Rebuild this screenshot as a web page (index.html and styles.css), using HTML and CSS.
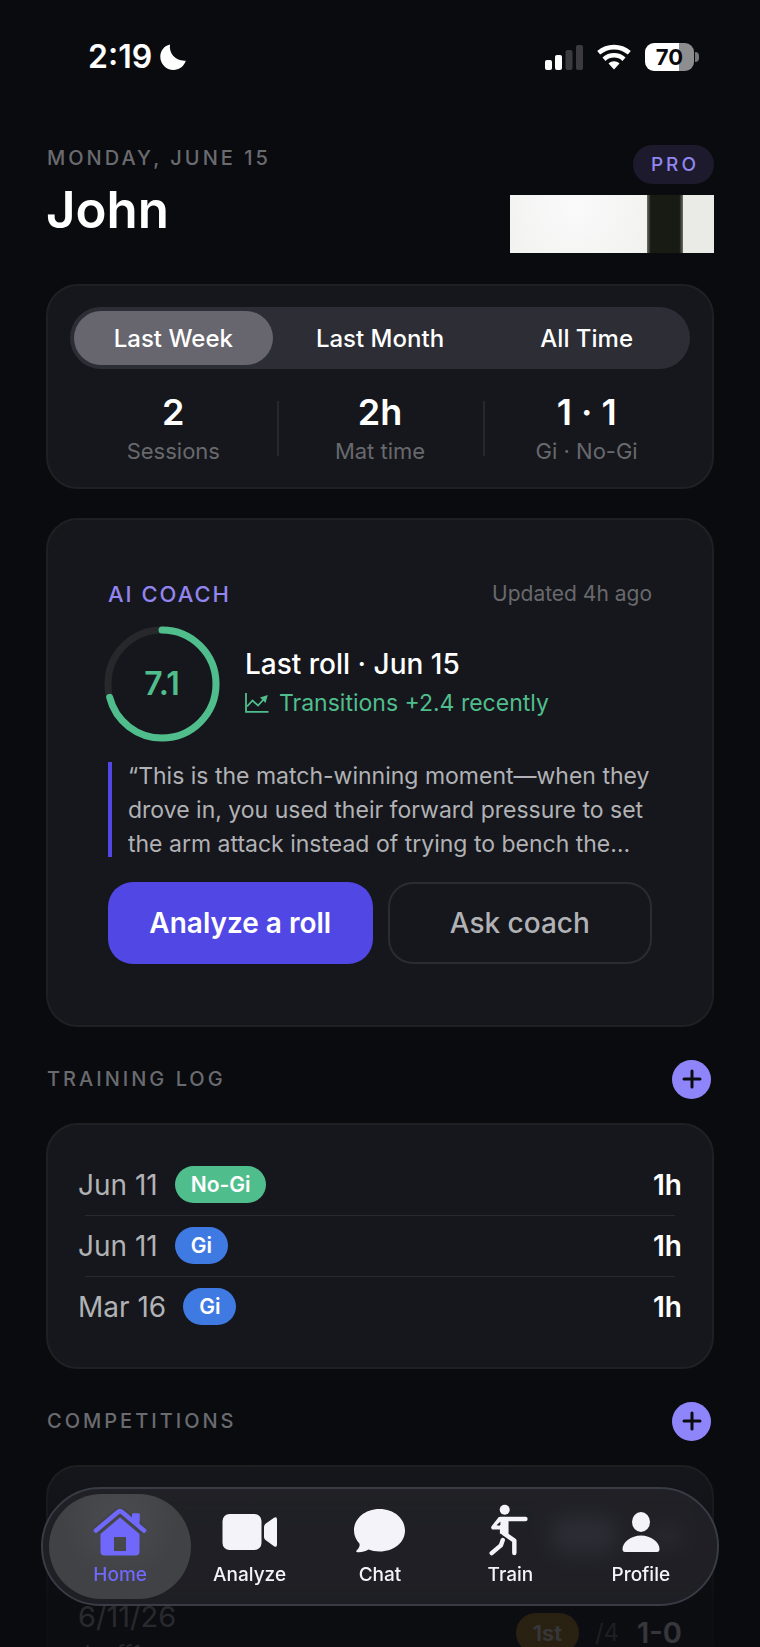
FILE: index.html
```html
<!DOCTYPE html>
<html lang="en">
<head>
<meta charset="utf-8">
<meta name="viewport" content="width=device-width, initial-scale=1">
<title>Home</title>
<link rel="stylesheet" href="styles.css">
</head>
<body>
<div class="app">
  <div class="status">
    <div class="status-time">
      <span>2:19</span>
      <svg width="26" height="26" viewBox="0 0 26 26" aria-hidden="true"><path d="M10 0.6C8.800 8.500 14.500 17.500 25.800 16.800C24 22.500 19 26 13.500 26C6 26 0.300 20 0.300 12.800C0.300 7 4.200 1.800 10 0.600Z" fill="#fff"/></svg>
    </div>
    <div class="status-icons">
      <svg width="38" height="26" viewBox="0 0 38 26" aria-hidden="true"><rect x="0" y="16" width="7" height="10" rx="2" fill="#fff"/><rect x="10" y="11" width="7" height="15" rx="2" fill="#fff"/><rect x="20.500" y="6" width="7" height="20" rx="2" fill="#3b3b3f"/><rect x="31" y="1" width="7" height="25" rx="2" fill="#3b3b3f"/></svg>
      <svg width="34" height="26" viewBox="0 0 34 26" aria-hidden="true"><g fill="none" stroke="#fff" stroke-width="4.600"><path d="M1.700 8.800C10.500 1.200 23.500 1.200 32.300 8.800"/><path d="M7 15.200C12.800 10 21.200 10 27 15.200"/></g><path d="M11.500 19.400C14.700 16.500 19.300 16.500 22.500 19.400L17 25.400Z" fill="#fff"/></svg>
      <div class="battery"><span>70</span></div>
    </div>
  </div>

  <main class="content">
    <header class="hero">
      <div>
        <p class="eyebrow">MONDAY, JUNE 15</p>
        <h1 class="name">John</h1>
      </div>
      <div class="hero-side">
        <span class="pro">PRO</span>
        <div class="belt" role="img" aria-label="White belt"></div>
      </div>
    </header>

    <section class="card summary">
      <div class="segments">
        <button type="button" class="segment segment-on">Last Week</button>
        <button type="button" class="segment">Last Month</button>
        <button type="button" class="segment">All Time</button>
      </div>
      <div class="stats">
        <div class="stat"><strong>2</strong><span>Sessions</span></div>
        <div class="stat"><strong>2h</strong><span>Mat time</span></div>
        <div class="stat"><strong>1 · 1</strong><span>Gi · No-Gi</span></div>
      </div>
    </section>

    <section class="card coach">
      <div class="coach-head">
        <h2>AI COACH</h2>
        <span>Updated 4h ago</span>
      </div>
      <div class="roll">
        <div class="ring">
          <svg viewBox="0 0 116 116" aria-hidden="true"><g fill="none" stroke-width="7"><circle cx="58" cy="58" r="54" stroke="#27282c"/><circle cx="58" cy="58" r="54" stroke="#50be8c" stroke-linecap="round" pathLength="100" stroke-dasharray="71 100" transform="rotate(-90 58 58)"/></g></svg>
          <span>7.1</span>
        </div>
        <div class="roll-text">
          <h3>Last roll · Jun 15</h3>
          <p>
            <svg width="24" height="20" viewBox="0 0 24 20" aria-hidden="true"><g fill="none" stroke="#50be8c" stroke-width="1.800"><path d="M1 0V18.800H23.500" /><path d="M2 13.500L7.500 7.500L13 12.500L19 6"/></g><path d="M15 4.500L22.800 2L20.500 10Z" fill="#50be8c"/></svg>
            Transitions +2.4 recently
          </p>
        </div>
      </div>
      <blockquote class="quote">“This is the match-winning moment—when they drove in, you used their forward pressure to set the arm attack instead of trying to bench the…</blockquote>
      <div class="actions">
        <button type="button" class="btn btn-primary">Analyze a roll</button>
        <button type="button" class="btn btn-ghost">Ask coach</button>
      </div>
    </section>

    <div class="section-head">
      <h2 class="eyebrow">TRAINING LOG</h2>
      <button type="button" class="add" aria-label="Add session"><svg width="20" height="20" viewBox="0 0 20 20"><path d="M10 2V18M2 10H18" stroke="#0b0c10" stroke-width="3" stroke-linecap="round"/></svg></button>
    </div>
    <ul class="card log">
      <li><span class="date">Jun 11</span><span class="tag tag-nogi">No-Gi</span><strong>1h</strong></li>
      <li><span class="date">Jun 11</span><span class="tag">Gi</span><strong>1h</strong></li>
      <li><span class="date">Mar 16</span><span class="tag">Gi</span><strong>1h</strong></li>
    </ul>

    <div class="section-head">
      <h2 class="eyebrow">COMPETITIONS</h2>
      <button type="button" class="add" aria-label="Add competition"><svg width="20" height="20" viewBox="0 0 20 20"><path d="M10 2V18M2 10H18" stroke="#0b0c10" stroke-width="3" stroke-linecap="round"/></svg></button>
    </div>
    <section class="card comps">
      <div class="comp-top" aria-hidden="true"><i class="bar"></i><i class="bar bar-place"></i><i class="bar bar-score"></i></div>
      <div class="comp">
        <div class="comp-name"><span>6/11/26</span><small>Jnoff1</small></div>
        <span class="place">1st</span><span class="of">/4</span><strong>1-0</strong>
      </div>
    </section>
  </main>

  <div class="fade"></div>
  <nav class="tabs">
    <a href="#home" class="tab tab-on">
      <svg width="54" height="48" viewBox="0 0 54 48" aria-hidden="true"><g fill="#7068fb"><path d="M27 9.500L46.500 26V43.500Q46.500 47.500 42.500 47.500H11.500Q7.500 47.500 7.500 43.500V26ZM21 29V43H33V29Z" fill-rule="evenodd"/><path d="M39 6.500Q39 5.500 40 5.500H45.500Q46.500 5.500 46.500 6.500V19L39 12.500Z"/></g><path d="M3 22.500L25 4Q27 2.200 29 4L51 22.500" fill="none" stroke="#434447" stroke-width="9"/><path d="M39 12V6.500Q39 5.500 40 5.500H45.500Q46.500 5.500 46.500 6.500V19Z" fill="#7068fb"/><path d="M3 22.500L25 4Q27 2.200 29 4L51 22.500" fill="none" stroke="#7068fb" stroke-width="4.500" stroke-linecap="round"/></svg>
      <span>Home</span>
    </a>
    <a href="#analyze" class="tab">
      <svg width="56" height="48" viewBox="0 0 56 48" aria-hidden="true"><rect x="0.500" y="6" width="39" height="36" rx="7" fill="#f3f3f9"/><path d="M42 19Q42 17 43.500 15.800L52 9.800Q55 8 55 11.500V36.500Q55 40 52 38.200L43.500 32Q42 31 42 29Z" fill="#f3f3f9"/></svg>
      <span>Analyze</span>
    </a>
    <a href="#chat" class="tab">
      <svg width="54" height="48" viewBox="0 0 54 48" aria-hidden="true"><path d="M26.500 1C41 1 52 10.500 52 22.500C52 34.500 41 43.500 26.500 43.500C22.500 43.500 18.500 42.800 15.500 41.500C12 43.800 8 44.500 4.500 44.200C2.800 44 3 42.800 4 42C6.200 40 7 37.800 6.500 35.800C3 32 1 27.500 1 22.500C1 10.500 12 1 26.500 1Z" fill="#f3f3f9"/></svg>
      <span>Chat</span>
    </a>
    <a href="#train" class="tab">
      <svg width="44" height="52" viewBox="2 0 44 54" aria-hidden="true"><circle cx="18.500" cy="6" r="5.200" fill="#f3f3f9"/><path d="M12.500 13.500H22.500V31H13.500V21Z" fill="#f3f3f9"/><g fill="none" stroke="#f3f3f9" stroke-linecap="round" stroke-linejoin="round" stroke-width="4.600"><path d="M14 15.500H40"/><path d="M13 16L6.500 24.500H13" stroke-width="4.200"/><path d="M17 30L28.500 38V51"/><path d="M16.500 37.500L14.500 43L5 51"/></g><path d="M10 22L14 18.500V21.800Z" fill="#1f2025"/></svg>
      <span>Train</span>
    </a>
    <a href="#profile" class="tab">
      <svg width="38" height="48" viewBox="0 0 38 48" aria-hidden="true"><ellipse cx="19" cy="14" rx="9" ry="10" fill="#f3f3f9"/><path d="M3 44Q0.500 44 0.500 41C0.500 34 9 27.500 19 27.500S37.500 34 37.500 41Q37.500 44 35 44Z" fill="#f3f3f9"/></svg>
      <span>Profile</span>
    </a>
  </nav>
</div>
</body>
</html>
```

FILE: styles.css
```css
* { box-sizing: border-box; }
body, h1, h2, h3, p, ul, blockquote { margin: 0; padding: 0; }
body {
  background: #0a0b0f;
  color: #fff;
  font-family: Inter, "Liberation Sans", sans-serif;
}
button { font: inherit; color: inherit; border: 0; padding: 0; background: none; }
svg { display: block; flex: none; }

.app { position: relative; height: 100vh; overflow: hidden; }

.status {
  display: flex;
  justify-content: space-between;
  align-items: center;
  height: 113px;
  padding: 0 60px 0 88px;
}
.status-time { display: flex; align-items: center; gap: 8px; font-size: 32px; font-weight: 600; }
.status-icons { display: flex; align-items: center; gap: 14px; }
.battery {
  position: relative;
  width: 49px;
  height: 28px;
  margin-right: 6px;
  border-radius: 9px;
  background: linear-gradient(90deg, #fff 70%, #8e8e90 70%);
  color: #0a0b0f;
  font-size: 22px;
  font-weight: 700;
  line-height: 28px;
  text-align: center;
}
.battery::after {
  content: "";
  position: absolute;
  left: 50px;
  top: 9px;
  width: 4px;
  height: 10px;
  border-radius: 0 5px 5px 0;
  background: #77777a;
}

.content { padding: 32px 46px 0; }
.hero { display: flex; justify-content: space-between; height: 139px; }
.eyebrow { padding-left: 1px; color: #6a6b6f; font-size: 20px; font-weight: 500; line-height: 26px; letter-spacing: 3px; }
.name { font-size: 51px; font-weight: 600; line-height: 78px; }
.hero-side { display: flex; flex-direction: column; align-items: flex-end; gap: 11px; }
.pro {
  padding: 0 15px 0 18px;
  border-radius: 20px;
  background: #1c1a2c;
  color: #9285f0;
  font-size: 19px;
  font-weight: 500;
  line-height: 39px;
  letter-spacing: 3px;
}
.belt {
  width: 204px;
  height: 58px;
  background:
    linear-gradient(90deg, transparent 67%, #77776f 67%, #181b13 69%, #181b13 83%, #77776f 85%, #eaeae7 85%),
    radial-gradient(circle at 32% 20%, #fbfafb, #eeefec 75%);
}

.card { border: 2px solid #1f2024; border-radius: 32px; background: #16171c; }

.summary { height: 205px; padding: 21px 22px; }
.segments {
  display: grid;
  grid-template-columns: repeat(3, 1fr);
  height: 62px;
  padding: 4px 0;
  border-radius: 31px;
  background: #2d2d35;
}
.segment { border-radius: 27px; font-size: 24px; font-weight: 500; }
.segment-on { margin: 0 4px; background: #67666e; }
.stats { display: grid; grid-template-columns: repeat(3, 1fr); padding-top: 22px; }
.stat { display: flex; flex-direction: column; align-items: center; }
.stat + .stat {
  background: linear-gradient(#27282c, #27282c) 0 10px / 2px 55px no-repeat;
}
.stat strong { font-size: 36px; font-weight: 600; line-height: 42px; }
.stat span { color: #68696d; font-size: 22px; line-height: 36px; }

.coach { margin-top: 29px; height: 509px; padding: 57px 60px 0; }
.coach-head {
  display: flex;
  justify-content: space-between;
  color: #68696d;
  font-size: 21px;
  line-height: 34px;
}
.coach-head h2 { color: #9285f0; font-size: 22px; font-weight: 500; letter-spacing: 2px; }
.roll { display: flex; align-items: center; gap: 25px; height: 118px; margin: 14px 0 16px -4px; }
.ring { position: relative; width: 116px; height: 116px; }
.ring span {
  position: absolute;
  inset: 0;
  color: #50be8c;
  font-size: 32px;
  font-weight: 600;
  line-height: 116px;
  text-align: center;
}
.roll-text h3 { font-size: 28px; font-weight: 500; line-height: 38px; }
.roll-text p { display: flex; align-items: center; gap: 10px; color: #50be8c; font-size: 23px; line-height: 40px; }
.quote {
  padding-left: 20px;
  background: linear-gradient(#5047e5, #5047e5) 0 3px / 4px 95px no-repeat;
  color: #b1b2b5;
  font-size: 23px;
  line-height: 34px;
}
.actions { display: grid; grid-template-columns: 1fr 1fr; gap: 15px; margin-top: 21px; }
.btn { height: 82px; border-radius: 25px; font-size: 28px; }
.btn-primary { background: #5047e5; font-weight: 600; }
.btn-ghost { border: 2px solid #2b2c31; color: #b1b2b5; font-weight: 500; }

.section-head { display: flex; justify-content: space-between; align-items: center; height: 96px; padding: 8px 3px 0 0; }
.add { display: grid; place-items: center; width: 39px; height: 39px; border-radius: 50%; background: #8f85fb; }

.log { height: 246px; padding: 29px 30px; list-style: none; }
.log li { display: flex; align-items: center; height: 61px; font-size: 28px; }
.log li + li { background: linear-gradient(#292a2f, #292a2f) center 0 / calc(100% - 14px) 1px no-repeat; }
.log strong { margin-left: auto; font-weight: 600; }
.date { color: #b1b2b5; }
.tag {
  margin-left: 17px;
  padding: 0 16px;
  border-radius: 19px;
  background: #3f7ae2;
  font-size: 21px;
  font-weight: 600;
  line-height: 37px;
}
.tag-nogi { background: #50be8c; }

.comps { height: 400px; padding: 30px; }
.comp-top { display: flex; align-items: center; height: 80px; }
.bar { width: 92px; height: 20px; border-radius: 12px; background: #8a8b90; }
.bar-place { width: 64px; height: 38px; margin-left: auto; background: #a4a4cc; }
.bar-score { width: 32px; height: 20px; margin-left: 34px; }
.comp { display: flex; align-items: flex-start; margin-top: 20px; font-size: 29px; line-height: 40px; }
.comp-name { display: flex; flex-direction: column; margin-right: auto; color: #b1b2b5; }
.comp-name small { font-size: 22px; line-height: 32px; }
.comp > .place { padding: 0 17px; border-radius: 20px; background: #b5821c; font-size: 22px; font-weight: 600; margin-top: 16px; }
.of { margin: 16px 18px 0 16px; color: #77787c; font-size: 24px; }
.comp strong { margin-top: 16px; font-weight: 600; }

.fade {
  position: absolute;
  inset: auto 0 0;
  height: 190px;
  background: linear-gradient(transparent, rgba(10, 11, 15, .82) 75%);
}

.tabs {
  position: absolute;
  left: 41px;
  right: 41px;
  bottom: 41px;
  display: grid;
  grid-template-columns: repeat(5, 1fr);
  height: 119px;
  padding: 5px 11px;
  border: 2px solid #393b45;
  border-radius: 60px;
  background: rgba(34, 35, 40, .84);
  backdrop-filter: blur(10px);
}
.tab {
  display: flex;
  flex-direction: column;
  align-items: center;
  justify-content: flex-end;
  padding-bottom: 12px;
  border-radius: 53px;
  color: #f3f3f9;
  font-size: 19px;
  font-weight: 500;
  line-height: 24px;
  text-decoration: none;
}
.tab svg { margin-bottom: 7px; }
.tab-on { margin: 0 -7px 0 -5px; background: radial-gradient(circle at 50% 25%, #4b4c4f, #414245 55%); color: #7068fb; }
```
